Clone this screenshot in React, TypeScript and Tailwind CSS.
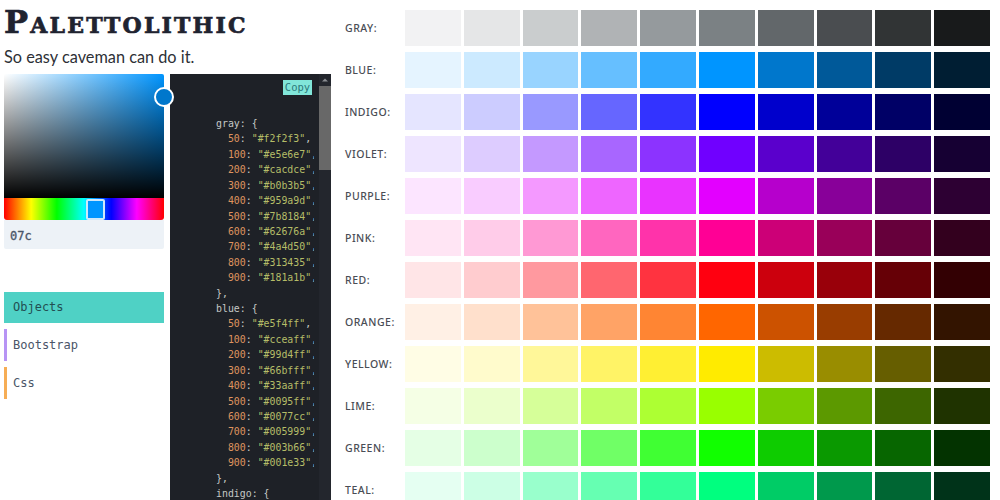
import React from 'react'

const palette = [
  { name: 'gray', shades: ['#f2f2f3', '#e5e6e7', '#cacdce', '#b0b3b5', '#959a9d', '#7b8184', '#62676a', '#4a4d50', '#313435', '#181a1b'] },
  { name: 'blue', shades: ['#e5f4ff', '#cceaff', '#99d4ff', '#66bfff', '#33aaff', '#0095ff', '#0077cc', '#005999', '#003b66', '#001e33'] },
  { name: 'indigo', shades: ['#e5e5ff', '#ccccff', '#9999ff', '#6666ff', '#3333ff', '#0000ff', '#0000cc', '#000099', '#000066', '#000033'] },
  { name: 'violet', shades: ['#eee5ff', '#ddccff', '#c499ff', '#a866ff', '#8c33ff', '#7000ff', '#5a00cc', '#430099', '#2d0066', '#160033'] },
  { name: 'purple', shades: ['#fce5ff', '#f9ccff', '#f499ff', '#ee66ff', '#e933ff', '#e300ff', '#b600cc', '#880099', '#5b0066', '#2d0033'] },
  { name: 'pink', shades: ['#ffe5f4', '#ffcce9', '#ff99d4', '#ff66bf', '#ff33aa', '#ff0095', '#cc0077', '#990059', '#66003b', '#33001e'] },
  { name: 'red', shades: ['#ffe5e7', '#ffcccf', '#ff999f', '#ff666f', '#ff3340', '#ff0010', '#cc000d', '#99000a', '#660006', '#330003'] },
  { name: 'orange', shades: ['#fff0e5', '#ffe0cc', '#ffc299', '#ffa366', '#ff8533', '#ff6600', '#cc5200', '#993d00', '#662900', '#331400'] },
  { name: 'yellow', shades: ['#fffde5', '#fffbcc', '#fff799', '#fff366', '#ffef33', '#ffeb00', '#ccbc00', '#998d00', '#665e00', '#332f00'] },
  { name: 'lime', shades: ['#f5ffe5', '#ebffcc', '#d6ff99', '#c2ff66', '#adff33', '#99ff00', '#7acc00', '#5c9900', '#3d6600', '#1f3300'] },
  { name: 'green', shades: ['#e5ffe5', '#ccffcc', '#a0ff99', '#70ff66', '#40ff33', '#11ff00', '#0ecc00', '#0a9900', '#076600', '#033300'] },
  { name: 'teal', shades: ['#e5fff2', '#ccffe5', '#99ffcc', '#66ffb2', '#33ff99', '#00ff7f', '#00cc66', '#00994c', '#006633', '#003319'] },
]

const steps = [50, 100, 200, 300, 400, 500, 600, 700, 800, 900]

const CodeBlock = () => (
  <pre className="pt-[42px] pl-[46px] font-['DejaVu_Sans_Mono',monospace] text-[9.9px] leading-[15.42px] text-[#c5c8c6]">
    {palette.slice(0, 2).map((color) => (
      <React.Fragment key={color.name}>
        {color.name}: {'{'}
        {'\n'}
        {color.shades.map((hex, i) => (
          <React.Fragment key={hex}>
            {'  '}
            <span className="text-[#de935f]">{steps[i]}</span>: <span className="text-[#b5bd68]">"{hex}"</span>,{'\n'}
          </React.Fragment>
        ))}
        {'},\n'}
      </React.Fragment>
    ))}
    {'indigo: {\n'}
  </pre>
)

const ColorPicker = () => (
  <div className="relative z-10 w-40">
    <div className="h-[124px] rounded-t-[2px] bg-[linear-gradient(to_bottom,transparent,#000),linear-gradient(to_right,#fff,#0095ff)]" />
    <div className="h-[22px] rounded-b-[3px] bg-[linear-gradient(to_right,#f00_0%,#ff0_17%,#0f0_33%,#0ff_50%,#00f_67%,#f0f_83%,#f00_100%)]" />
    <div className="absolute left-[150px] top-[13px] h-5 w-5 rounded-full border-2 border-white bg-[#0077cc]" />
    <div className="absolute left-[82px] top-[125px] h-[21px] w-[19px] rounded-[2px] border-2 border-[#cfe8fb] bg-[#0095ff]" />
    <div className="h-[29px] rounded-b-[2px] bg-[#edf2f7] pt-[3px] pl-[6px] font-['DejaVu_Sans_Mono',monospace] text-[12px] leading-[27px] text-[#4a5568] [-webkit-text-stroke:0.3px_#4a5568]">
      07c
    </div>
  </div>
)

const Tabs = () => (
  <div className="mt-[43px] flex w-40 flex-col font-['DejaVu_Sans_Mono',monospace] text-[12px] text-[#4a5568]">
    <div className="h-[31px] bg-[#4fd1c5] pl-[9px] leading-[31px] text-[#234e52]">Objects</div>
    <div className="mt-[6px] h-8 border-l-[3px] border-[#b794f4] pl-[6px] leading-[32px]">Bootstrap</div>
    <div className="mt-[6px] h-8 border-l-[3px] border-[#f6ad55] pl-[6px] leading-[32px]">Css</div>
  </div>
)

export default function App() {
  return (
    <div className="flex h-[500px] w-[1000px] overflow-hidden bg-white">
      <div className="flex w-[331px] shrink-0 flex-col">
        <div className="h-[74px] pl-1">
          <h1 className="h-[45px] pt-[4px] font-['DejaVu_Serif',serif] text-[32px] leading-[36px] font-bold tracking-[2.2px] whitespace-nowrap text-[#1f2330] [-webkit-text-stroke:0.7px_#1f2330] [font-variant:small-caps]">
            Palettolithic
          </h1>
          <p className="font-['Lato',sans-serif] text-[16.3px] leading-6 text-[#2d3036]">So easy caveman can do it.</p>
        </div>
        <div className="flex min-h-0 flex-1">
          <div className="w-[170px] shrink-0 pl-1">
            <ColorPicker />
            <Tabs />
          </div>
          <div className="relative flex min-w-0 flex-1 bg-[#1e2127]">
            <div className="mr-[5px] min-w-0 flex-1 overflow-hidden">
              <CodeBlock />
            </div>
            <div className="absolute left-[113px] top-[6px] h-[15px] w-[29px] bg-[#81e6d9] text-center font-['DejaVu_Sans_Mono',monospace] text-[10.5px] leading-[15px] text-[#2c7a7b]">
              Copy
            </div>
            <div className="w-3 shrink-0 bg-[#23262d]">
              <svg className="block h-3 w-3" viewBox="0 0 12 12">
                <path d="M3 7.5 6 4.5 9 7.5Z" fill="#8a8d92" />
              </svg>
              <div className="h-[84px] bg-[#686868]" />
            </div>
          </div>
        </div>
      </div>
      <div className="flex flex-1 flex-col gap-[6px] pt-[10px] pr-[10px] pl-[14px]">
        {palette.map((color) => (
          <div key={color.name} className="flex h-9 shrink-0 items-center">
            <div className="w-[60px] shrink-0 pt-[2px] font-['Noto_Sans',sans-serif] text-[10.5px] font-medium tracking-[0.5px] text-[#4a4d55] uppercase">
              {color.name}:
            </div>
            <div className="grid h-full flex-1 grid-cols-10 gap-[3px]">
              {color.shades.map((hex) => (
                <div key={hex} className="h-full" style={{ backgroundColor: hex }} />
              ))}
            </div>
          </div>
        ))}
      </div>
    </div>
  )
}
